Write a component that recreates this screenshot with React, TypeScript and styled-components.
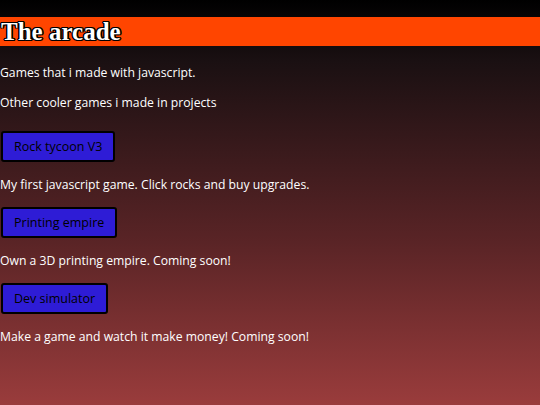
import { createGlobalStyle } from "styled-components";
import styled from "styled-components";

const GlobalStyle = createGlobalStyle`
  html, body {
    margin: 0;
    padding: 0;
  }
  body {
    min-height: 100vh;
    background: linear-gradient(#000000 0%, #1a1012 15%, #5a2426 60%, #9a3c3c 100%);
    font-family: "Comic Sans MS", "Open Sans", sans-serif;
    color: #ffffff;
  }
`;

const Page = styled.main`
  display: flex;
  flex-direction: column;
  padding-top: 17px;
`;

const Header = styled.h1`
  margin: 0;
  height: 29px;
  background: #ff4500;
  font-family: "Liberation Serif", serif;
  font-weight: bold;
  font-size: 25px;
  line-height: 30px;
  color: #ffffff;
  text-shadow: 1px 1px 0 #000, -1px -1px 0 #000, 1px -1px 0 #000, -1px 1px 0 #000,
    1.5px 0 0 #000, -1.5px 0 0 #000;
  padding-left: 1px;
`;

const Text = styled.p`
  margin: 0;
  font-size: 12.2px;
  line-height: 18px;
`;

const Intro = styled.div`
  display: flex;
  flex-direction: column;
  gap: 12px;
  padding-top: 18px;
`;

const Games = styled.div`
  display: flex;
  flex-direction: column;
  padding-top: 19px;
`;

const Game = styled.section`
  display: flex;
  flex-direction: column;
  align-items: flex-start;
  gap: 14px;
  margin-bottom: 13px;
`;

const GameButton = styled.button`
  margin-left: 1px;
  height: 31px;
  padding: 0 11px;
  background: #2e1cd6;
  border: 2px solid #000;
  border-radius: 3px;
  font-family: "Comic Sans MS", "Open Sans", sans-serif;
  font-size: 12.5px;
  color: #000;
  cursor: pointer;
`;

const games = [
  { name: "Rock tycoon V3", desc: "My first javascript game. Click rocks and buy upgrades." },
  { name: "Printing empire", desc: "Own a 3D printing empire. Coming soon!" },
  { name: "Dev simulator", desc: "Make a game and watch it make money! Coming soon!" },
];

export default function App() {
  return (
    <>
      <GlobalStyle />
      <Page>
        <Header>The arcade</Header>
        <Intro>
          <Text>Games that i made with javascript.</Text>
          <Text>Other cooler games i made in projects</Text>
        </Intro>
        <Games>
          {games.map((g) => (
            <Game key={g.name}>
              <GameButton>{g.name}</GameButton>
              <Text>{g.desc}</Text>
            </Game>
          ))}
        </Games>
      </Page>
    </>
  );
}
